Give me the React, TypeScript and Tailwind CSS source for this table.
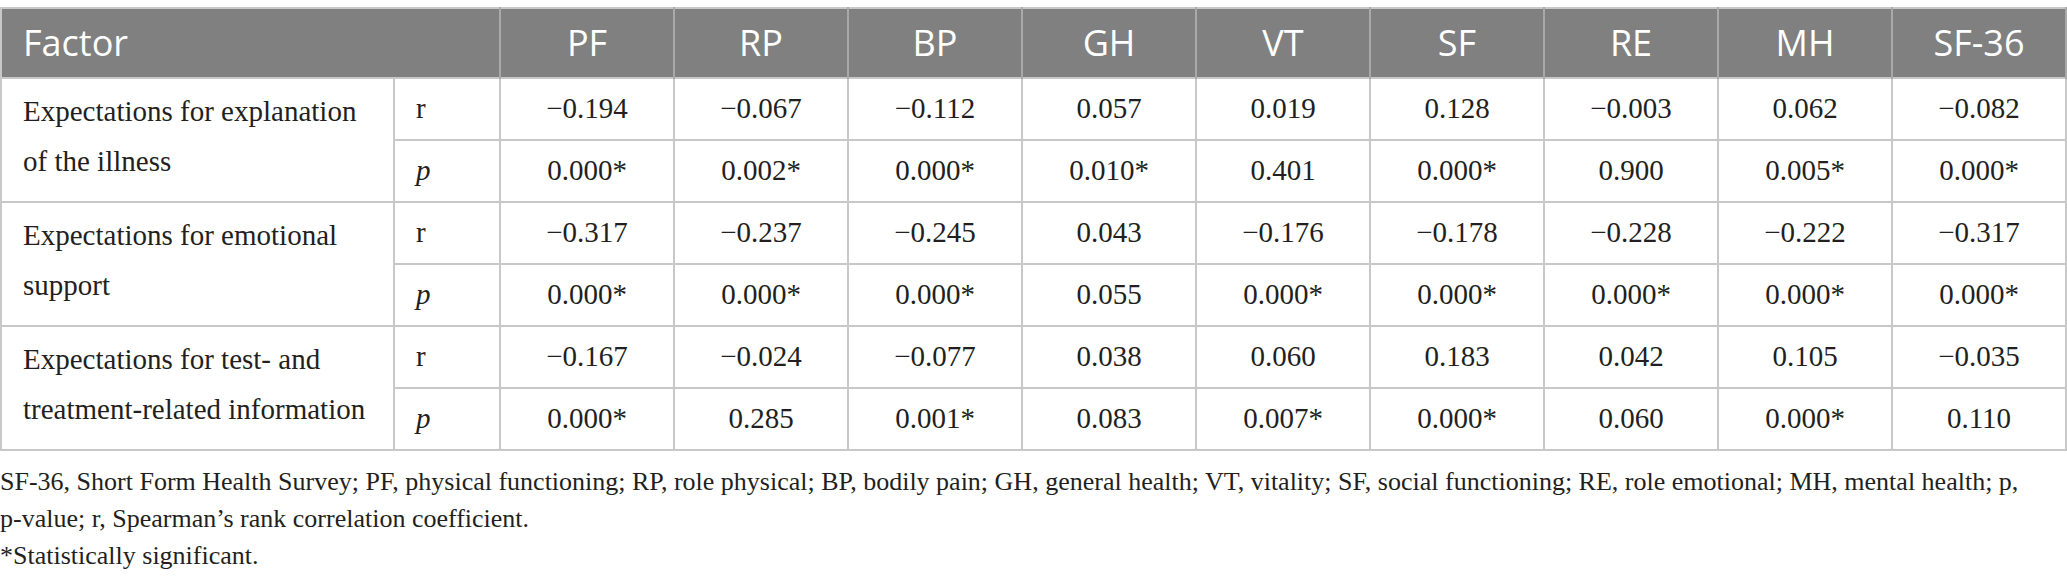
const headers = ["PF", "RP", "BP", "GH", "VT", "SF", "RE", "MH", "SF-36"];

const groups = [
  {
    factor: ["Expectations for explanation", "of the illness"],
    r: ["−0.194", "−0.067", "−0.112", "0.057", "0.019", "0.128", "−0.003", "0.062", "−0.082"],
    p: ["0.000*", "0.002*", "0.000*", "0.010*", "0.401", "0.000*", "0.900", "0.005*", "0.000*"],
  },
  {
    factor: ["Expectations for emotional", "support"],
    r: ["−0.317", "−0.237", "−0.245", "0.043", "−0.176", "−0.178", "−0.228", "−0.222", "−0.317"],
    p: ["0.000*", "0.000*", "0.000*", "0.055", "0.000*", "0.000*", "0.000*", "0.000*", "0.000*"],
  },
  {
    factor: ["Expectations for test- and", "treatment-related information"],
    r: ["−0.167", "−0.024", "−0.077", "0.038", "0.060", "0.183", "0.042", "0.105", "−0.035"],
    p: ["0.000*", "0.285", "0.001*", "0.083", "0.007*", "0.000*", "0.060", "0.000*", "0.110"],
  },
];

const App = () => {
  return (
    <div className="w-[2067px] bg-white pt-[7px] font-[Liberation_Serif,serif] text-[#231f20]">
      <table className="w-[2067px] table-fixed border-collapse font-[Liberation_Serif,serif]">
        <colgroup>
          <col className="w-[393px]" />
          <col className="w-[106px]" />
          {headers.map((h) => (
            <col key={h} className="w-[174px]" />
          ))}
        </colgroup>
        <thead>
          <tr className="h-[70px] border-2 border-[#c8c8c8] bg-[#7f807f] font-[Open_Sans,sans-serif] text-[36px] font-normal text-white">
            <th colSpan={2} className="border-r-2 border-[#a9a9a9] pl-[21px] text-left font-normal">
              Factor
            </th>
            {headers.map((h) => (
              <th key={h} className="border-x-2 border-[#a9a9a9] text-center font-normal">
                {h}
              </th>
            ))}
          </tr>
        </thead>
        <tbody className="text-[29px]">
          {groups.map((g) => (
            <>
              <tr key={g.factor[0] + "r"} className="h-[62px]">
                <td
                  rowSpan={2}
                  className="border-2 border-[#c8c8c8] pl-[21px] pt-[7px] align-top leading-[50px]"
                >
                  {g.factor[0]}
                  <br />
                  {g.factor[1]}
                </td>
                <td className="border-2 border-[#c8c8c8] pl-[21px]">r</td>
                {g.r.map((v, i) => (
                  <td key={i} className="border-2 border-[#c8c8c8] text-center">
                    {v}
                  </td>
                ))}
              </tr>
              <tr key={g.factor[0] + "p"} className="h-[62px]">
                <td className="border-2 border-[#c8c8c8] pl-[21px] italic">p</td>
                {g.p.map((v, i) => (
                  <td key={i} className="border-2 border-[#c8c8c8] text-center">
                    {v}
                  </td>
                ))}
              </tr>
            </>
          ))}
        </tbody>
      </table>
      <div className="mt-[12px] pb-[20px] text-[26px] leading-[37px]">
        <p>
          SF-36, Short Form Health Survey; PF, physical functioning; RP, role physical; BP, bodily pain; GH,
          general health; VT, vitality; SF, social functioning; RE, role emotional; MH, mental health; p,
          <br />
          p-value; r, Spearman’s rank correlation coefficient.
        </p>
        <p>*Statistically significant.</p>
      </div>
    </div>
  );
};

export default App;
